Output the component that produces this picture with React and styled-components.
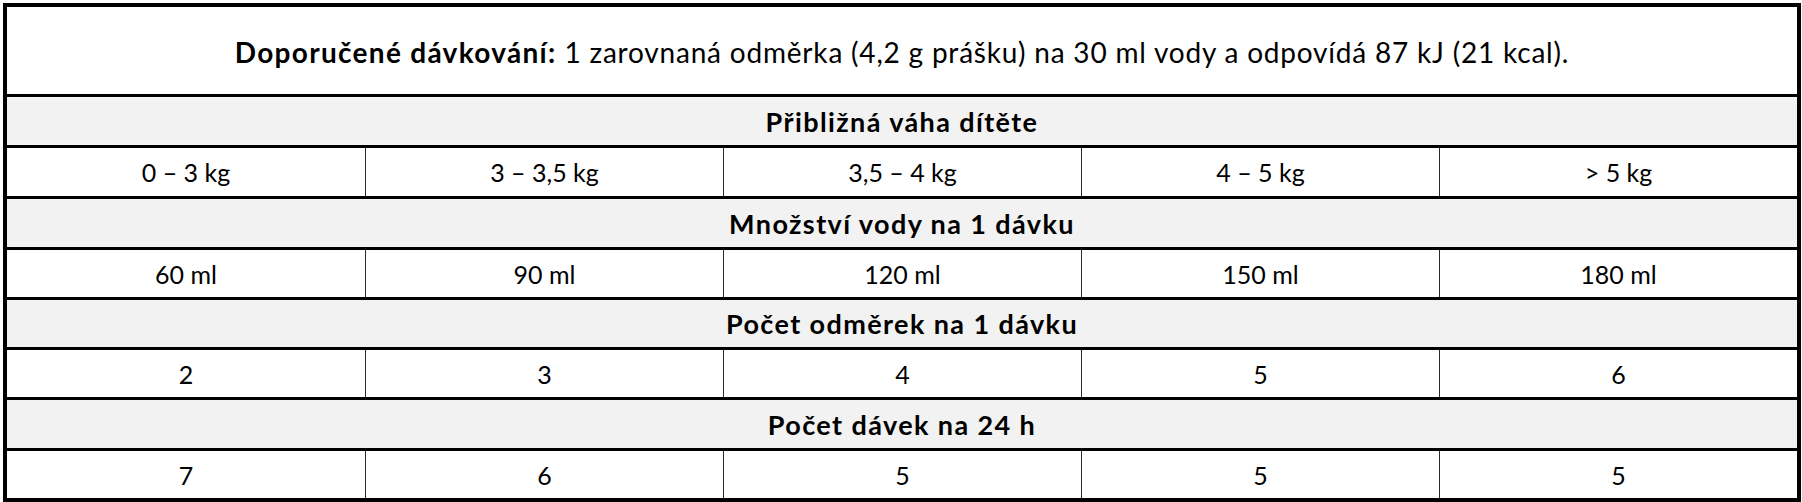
import React from "react";
import styled, { createGlobalStyle } from "styled-components";

const GlobalStyle = createGlobalStyle`
  html, body {
    margin: 0;
    padding: 0;
    background: #fff;
  }
  body {
    font-family: Lato, "Liberation Sans", sans-serif;
    color: #000;
  }
`;

const sections = [
  { title: "Přibližná váha dítěte", values: ["0 – 3 kg", "3 – 3,5 kg", "3,5 – 4 kg", "4 – 5 kg", "> 5 kg"], heights: [48, 48] },
  { title: "Množství vody na 1 dávku", values: ["60 ml", "90 ml", "120 ml", "150 ml", "180 ml"], heights: [48, 47] },
  { title: "Počet odměrek na 1 dávku", values: ["2", "3", "4", "5", "6"], heights: [47, 47] },
  { title: "Počet dávek na 24 h", values: ["7", "6", "5", "5", "5"], heights: [48, 47] },
];

const Page = styled.div`
  padding: 3px 1px 0 3px;
`;

const Frame = styled.div`
  width: 1798px;
  box-sizing: border-box;
  border: 4px solid #000;
  display: flex;
  flex-direction: column;
`;

const Intro = styled.div`
  height: 87px;
  display: flex;
  align-items: center;
  justify-content: center;
  font-size: 28px;
  letter-spacing: 0.8px;
  padding-top: 2px;
  box-sizing: border-box;
  background: #fff;

  b {
    font-weight: 700;
    letter-spacing: 1.3px;
  }
`;

const SectionTitle = styled.div`
  height: ${({ $h }) => $h + 3}px;
  box-sizing: border-box;
  border-top: 3px solid #000;
  background: #f2f2f2;
  display: flex;
  align-items: center;
  justify-content: center;
  font-size: 27px;
  font-weight: 700;
  letter-spacing: 1.4px;
`;

const ValueRow = styled.div`
  height: ${({ $h }) => $h + 3}px;
  box-sizing: border-box;
  border-top: 3px solid #000;
  display: grid;
  grid-template-columns: repeat(5, 1fr);
  background: #fff;
`;

const Cell = styled.div`
  display: flex;
  align-items: center;
  justify-content: center;
  font-size: 25px;
  & + & {
    border-left: 1px solid #2b2b2b;
  }
`;

export default function App() {
  return (
    <Page>
      <GlobalStyle />
      <Frame>
        <Intro>
          <span>
            <b>Doporučené dávkování:</b> 1 zarovnaná odměrka (4,2 g prášku) na 30 ml vody a odpovídá 87 kJ (21 kcal).
          </span>
        </Intro>
        {sections.map((s) => (
          <React.Fragment key={s.title}>
            <SectionTitle $h={s.heights[0]}>{s.title}</SectionTitle>
            <ValueRow $h={s.heights[1]}>
              {s.values.map((v, i) => (
                <Cell key={i}>{v}</Cell>
              ))}
            </ValueRow>
          </React.Fragment>
        ))}
      </Frame>
    </Page>
  );
}
